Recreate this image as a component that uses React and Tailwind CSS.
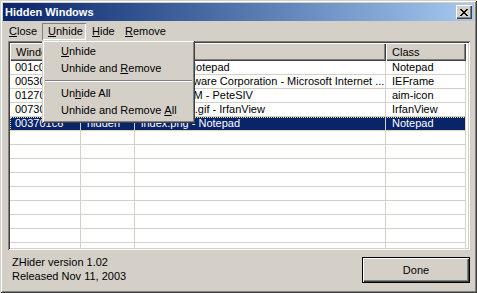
import React from "react";

const rows = [
  ["001c04a2", "hidden", "Untitled - Notepad", "Notepad"],
  ["00530aa8", "hidden", "Home Software Corporation - Microsoft Internet ...", "IEFrame"],
  ["01270b3e", "hidden", "Buddies AIM - PeteSIV", "aim-icon"],
  ["00730c10", "hidden", "screenshot.gif - IrfanView", "IrfanView"],
  ["003701c6", "hidden", "index.png - Notepad", "Notepad"],
];

const cols = ["w-[71px] pl-[5px]", "w-[54px] pl-[6px]", "w-[251px] pl-[6px]", "w-[80px] pl-[6px]"];
const headW = ["w-[71px]", "w-[54px]", "w-[251px]", "w-[80px]"];

function CloseGlyph() {
  // 8x7 pixel "x" of the classic caption button
  const px = [
    [0, 0], [1, 0], [6, 0], [7, 0],
    [1, 1], [2, 1], [5, 1], [6, 1],
    [2, 2], [3, 2], [4, 2], [5, 2],
    [3, 3], [4, 3],
    [2, 4], [3, 4], [4, 4], [5, 4],
    [1, 5], [2, 5], [5, 5], [6, 5],
    [0, 6], [1, 6], [6, 6], [7, 6],
  ];
  return (
    <svg width="8" height="7" viewBox="0 0 8 7" shapeRendering="crispEdges">
      {px.map(([x, y]) => (
        <rect key={`${x}-${y}`} x={x} y={y} width="1" height="1" fill="#000" />
      ))}
    </svg>
  );
}

function U({ children }) {
  return <span className="underline underline-offset-[1px] decoration-1">{children}</span>;
}

export default function App() {
  const empty = Array.from({ length: 10 });

  return (
    <div className="relative w-[477px] h-[293px] overflow-hidden bg-[#d4d0c8] p-[3px] flex flex-col text-[11px] leading-[13px] text-black font-['Liberation_Sans',Arial,sans-serif] shadow-[inset_1px_1px_0_#d4d0c8,inset_-1px_-1px_0_#404040,inset_2px_2px_0_#fff,inset_-2px_-2px_0_#808080]">

      {/* TITLE BAR */}
      <div className="h-[18px] flex items-center justify-between pl-[2px] pr-[2px] bg-linear-to-r from-[#0a246a] to-[#a6caf0]">
        <span className="font-bold text-white">Hidden Windows</span>
        <div className="w-[16px] h-[14px] bg-[#d4d0c8] flex items-center justify-center shadow-[inset_1px_1px_0_#fff,inset_-1px_-1px_0_#404040,inset_-2px_-2px_0_#808080]">
          <CloseGlyph />
        </div>
      </div>

      {/* MENU BAR */}
      <div className="h-[20px] flex items-center">
        <div className="w-[39px] h-[17px] flex items-center pl-[6px]"><U>C</U>lose</div>
        <div className="w-[44px] h-[17px] flex items-center pl-[6px] shadow-[inset_1px_1px_0_#808080,inset_-1px_-1px_0_#fff]"><U>U</U>nhide</div>
        <div className="w-[33px] h-[17px] flex items-center pl-[6px]"><U>H</U>ide</div>
        <div className="w-[50px] h-[17px] flex items-center pl-[6px]"><U>R</U>emove</div>
      </div>

      {/* LIST */}
      <div className="ml-[5px] w-[462px] h-[209px] p-[2px] bg-white shadow-[inset_1px_1px_0_#808080,inset_-1px_-1px_0_#fff,inset_2px_2px_0_#404040,inset_-2px_-2px_0_#d4d0c8]">
        <div className="w-full h-full overflow-hidden bg-white">
          <div className="flex h-[18px]">
            {["Window", "State", "Title", "Class"].map((h, i) => (
              <div
                key={h}
                className={`${headW[i]} h-[18px] pl-[6px] flex items-center bg-[#d4d0c8] shadow-[inset_1px_1px_0_#fff,inset_-1px_-1px_0_#404040,inset_-2px_-2px_0_#808080]`}
              >
                {h}
              </div>
            ))}
          </div>

          {rows.map((r, ri) => {
            const sel = ri === 4;
            return (
              <div
                key={ri}
                className={
                  sel
                    ? "flex w-[456px] h-[14px] border-b border-[#d4d0c8] bg-[#0a246a] text-white outline outline-dotted outline-1 -outline-offset-1 outline-[#e8dca0]"
                    : "flex w-[456px] h-[14px] border-b border-[#d4d0c8]"
                }
              >
                {r.map((c, ci) => (
                  <div key={ci} className={`${cols[ci]} h-[13px] whitespace-nowrap overflow-hidden border-r border-[#d4d0c8]`}>
                    {c}
                  </div>
                ))}
              </div>
            );
          })}

          {empty.map((_, ri) => (
            <div key={`e${ri}`} className="flex w-[456px] h-[14px] border-b border-[#d4d0c8]">
              {cols.map((c, ci) => (
                <div key={ci} className={`${c} h-[13px] border-r border-[#d4d0c8]`} />
              ))}
            </div>
          ))}
        </div>
      </div>

      {/* FOOTER */}
      <div className="flex-1 flex justify-between">
        <div className="pl-[9px] pt-[5px] leading-[14px]">
          <div>ZHider version 1.02</div>
          <div>Released Nov 11, 2003</div>
        </div>
        <div className="mt-[7px] mr-[4px] w-[108px] h-[26px] border border-black bg-[#d4d0c8] flex items-center justify-center shadow-[inset_1px_1px_0_#fff,inset_-1px_-1px_0_#404040,inset_-2px_-2px_0_#808080]">
          Done
        </div>
      </div>

      {/* UNHIDE DROPDOWN */}
      <div className="absolute left-[42px] top-[40px] w-[153px] h-[83px] pt-[3px] bg-[#d4d0c8] shadow-[inset_1px_1px_0_#d4d0c8,inset_-1px_-1px_0_#404040,inset_2px_2px_0_#fff,inset_-2px_-2px_0_#808080]">
        <div className="h-[17px] flex items-center pl-[19px]"><U>U</U>nhide</div>
        <div className="h-[17px] flex items-center pl-[19px]">Unhide and&nbsp;<U>R</U>emove</div>
        <div className="h-[8px] flex flex-col justify-center mx-[3px]">
          <div className="h-[1px] bg-[#808080]" />
          <div className="h-[1px] bg-white" />
        </div>
        <div className="h-[17px] flex items-center pl-[19px]">Un<U>h</U>ide All</div>
        <div className="h-[17px] flex items-center pl-[19px]">Unhide and Remove&nbsp;<U>A</U>ll</div>
      </div>
    </div>
  );
}
